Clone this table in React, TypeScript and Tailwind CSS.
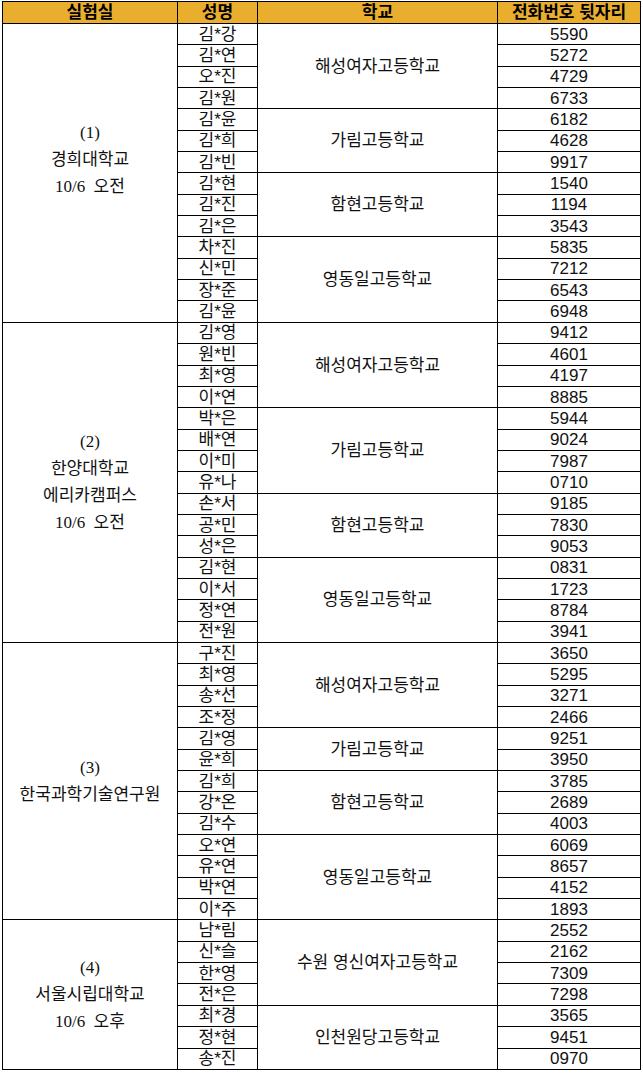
import React from "react";

type Student = [string, string];
type School = { name: string; students: Student[] };
type Lab = { lines: string[]; schools: School[] };

const labs: Lab[] = [
  {
    lines: ["(1)", "경희대학교", "10/6 오전", ""],
    schools: [
      { name: "해성여자고등학교", students: [["김*강", "5590"], ["김*연", "5272"], ["오*진", "4729"], ["김*원", "6733"]] },
      { name: "가림고등학교", students: [["김*윤", "6182"], ["김*희", "4628"], ["김*빈", "9917"]] },
      { name: "함현고등학교", students: [["김*현", "1540"], ["김*진", "1194"], ["김*은", "3543"]] },
      { name: "영동일고등학교", students: [["차*진", "5835"], ["신*민", "7212"], ["장*준", "6543"], ["김*윤", "6948"]] },
    ],
  },
  {
    lines: ["(2)", "한양대학교", "에리카캠퍼스", "10/6 오전"],
    schools: [
      { name: "해성여자고등학교", students: [["김*영", "9412"], ["원*빈", "4601"], ["최*영", "4197"], ["이*연", "8885"]] },
      { name: "가림고등학교", students: [["박*은", "5944"], ["배*연", "9024"], ["이*미", "7987"], ["유*나", "0710"]] },
      { name: "함현고등학교", students: [["손*서", "9185"], ["공*민", "7830"], ["성*은", "9053"]] },
      { name: "영동일고등학교", students: [["김*현", "0831"], ["이*서", "1723"], ["정*연", "8784"], ["전*원", "3941"]] },
    ],
  },
  {
    lines: ["(3)", "한국과학기술연구원"],
    schools: [
      { name: "해성여자고등학교", students: [["구*진", "3650"], ["최*영", "5295"], ["송*선", "3271"], ["조*정", "2466"]] },
      { name: "가림고등학교", students: [["김*영", "9251"], ["윤*희", "3950"]] },
      { name: "함현고등학교", students: [["김*희", "3785"], ["강*온", "2689"], ["김*수", "4003"]] },
      { name: "영동일고등학교", students: [["오*연", "6069"], ["유*연", "8657"], ["박*연", "4152"], ["이*주", "1893"]] },
    ],
  },
  {
    lines: ["(4)", "서울시립대학교", "10/6 오후"],
    schools: [
      { name: "수원 영신여자고등학교", students: [["남*림", "2552"], ["신*슬", "2162"], ["한*영", "7309"], ["전*은", "7298"]] },
      { name: "인천원당고등학교", students: [["최*경", "3565"], ["정*현", "9451"], ["송*진", "0970"]] },
    ],
  },
];

const spans: Record<number, string> = {
  2: "row-span-2",
  3: "row-span-3",
  4: "row-span-4",
  7: "row-span-7",
  13: "row-span-13",
  14: "row-span-14",
  15: "row-span-15",
};

const cell = "bg-white flex items-center justify-center text-[17px] leading-none text-[#111] whitespace-pre";

export default function App() {
  const cells: React.ReactNode[] = [];

  labs.forEach((lab, li) => {
    const total = lab.schools.reduce((n, s) => n + s.students.length, 0);
    lab.schools.forEach((school, si) => {
      school.students.forEach(([name, phone], ri) => {
        const key = `${li}-${si}-${ri}`;
        // 실험실 칸은 첫 행에서만
        if (si === 0 && ri === 0) {
          cells.push(
            <div
              key={key + "lab"}
              className={`${cell} col-start-1 ${spans[total]} flex-col [word-spacing:4px] font-['Liberation_Serif','Noto_Sans_CJK_KR',serif]`}
            >
              {lab.lines.map((l, i) => (
                <div key={i} className="leading-[27px]">
                  {l || "\u00a0"}
                </div>
              ))}
            </div>
          );
        }
        cells.push(
          <div key={key + "n"} className={`${cell} col-start-2`}>
            {name}
          </div>
        );
        if (ri === 0) {
          cells.push(
            <div key={key + "s"} className={`${cell} col-start-3 ${spans[school.students.length]}`}>
              {school.name}
            </div>
          );
        }
        cells.push(
          <div key={key + "p"} className={`${cell} col-start-4`}>
            {phone}
          </div>
        );
      });
    });
  });

  return (
    <div className="bg-white w-[643px] h-[1074px] pt-px pl-[2px] font-['Liberation_Sans','Noto_Sans_CJK_KR',sans-serif]">
      <div className="grid w-fit grid-cols-[174px_79px_239px_142px] grid-rows-[21px_repeat(49,20.35px)] gap-px bg-black p-px">
        {["실험실", "성명", "학교", "전화번호 뒷자리"].map((h) => (
          <div
            key={h}
            className="bg-[#EAAE2E] flex items-center justify-center text-[17px] font-bold text-black leading-none"
          >
            {h}
          </div>
        ))}
        {cells}
      </div>
    </div>
  );
}
